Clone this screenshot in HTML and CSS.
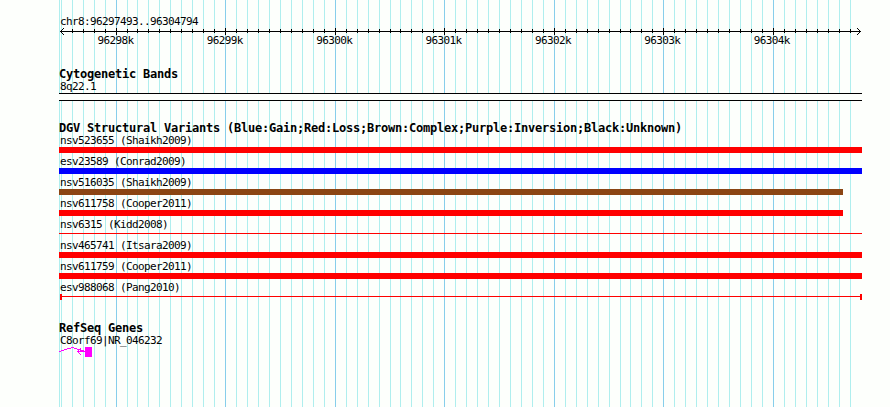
FILE: index.html
```
<!DOCTYPE html>
<html lang="en">
<head>
  <meta charset="UTF-8">
  <title>chr8:96297493..96304794</title>
  <link rel="stylesheet" href="styles.css">
</head>
<body>

  <svg class="grid" width="890" height="407">
    <path class="minor" id="minor"/>
    <path class="major" id="major"/>
  </svg>

  <div class="tracks">
    <div class="ruler">
      <div class="label">chr8:96297493..96304794</div>
      <svg class="scale" width="803" height="7">
        <path id="ticks"/>
        <path d="M1 3.5H802M2.5 2V3M3.5 1V2M4.5 0V1M2.5 4V5M3.5 5V6M4.5 6V7M800.5 2V3M799.5 1V2M798.5 0V1M800.5 4V5M799.5 5V6M798.5 6V7"/>
      </svg>
      <div class="numbers">
        <span>96298k</span>
        <span>96299k</span>
        <span>96300k</span>
        <span>96301k</span>
        <span>96302k</span>
        <span>96303k</span>
        <span>96304k</span>
      </div>
    </div>

    <div class="track cyto">
      <h2>Cytogenetic Bands</h2>
      <div class="label">8q22.1</div>
      <div class="band"></div>
    </div>

    <div class="track variants">
      <h2>DGV Structural Variants (Blue:Gain;Red:Loss;Brown:Complex;Purple:Inversion;Black:Unknown)</h2>
      <div class="variant">
        <div class="label">nsv523655 (Shaikh2009)</div>
        <div class="bar loss"></div>
      </div>
      <div class="variant">
        <div class="label">esv23589 (Conrad2009)</div>
        <div class="bar gain"></div>
      </div>
      <div class="variant">
        <div class="label">nsv516035 (Shaikh2009)</div>
        <div class="bar complex short"></div>
      </div>
      <div class="variant">
        <div class="label">nsv611758 (Cooper2011)</div>
        <div class="bar loss short"></div>
      </div>
      <div class="variant">
        <div class="label">nsv6315 (Kidd2008)</div>
        <div class="bar thin"></div>
      </div>
      <div class="variant">
        <div class="label">nsv465741 (Itsara2009)</div>
        <div class="bar loss"></div>
      </div>
      <div class="variant">
        <div class="label">nsv611759 (Cooper2011)</div>
        <div class="bar loss"></div>
      </div>
      <div class="variant">
        <div class="label">esv988068 (Pang2010)</div>
        <div class="bar thin capped"></div>
      </div>
    </div>

    <div class="track genes">
      <h2>RefSeq Genes</h2>
      <div class="label">C8orf69|NR_046232</div>
      <svg class="gene" width="34" height="12">
        <path d="M0 5.5L13.5 1.5L26 5.5M18.5 5.5H26M22 2.5L18.5 5.5L22 9"/>
        <rect x="26" y="1" width="7" height="10"/>
      </svg>
    </div>
  </div>

  <script>
    var minor = 'M59.5 0V407';
    var major = '';
    var ticks = '';
    var x = 61;
    for (var i = -5; x <= 850; i++) {
      if (i % 10 === 0) {
        major += 'M' + (x + 0.5) + ' 0V407';
        ticks += 'M' + (x - 58.5) + ' 0V7';
      } else {
        minor += 'M' + (x + 0.5) + ' 0V407';
        if (i > -5) ticks += 'M' + (x - 58.5) + ' 1V5';
      }
      // the rounded step is one pixel shorter at these lines
      x += (x === 127 || x === 390 || x === 620) ? 10 : 11;
    }
    document.getElementById('minor').setAttribute('d', minor);
    document.getElementById('major').setAttribute('d', major);
    document.getElementById('ticks').setAttribute('d', ticks);
  </script>

</body>
</html>
```

FILE: styles.css
```
body {
  margin: 0;
  height: 407px;
  overflow: hidden;
  background-color: #fdfffc;
  color: #000;
  font-family: 'DejaVu Sans Mono', monospace;
  font-size: 11px;
  line-height: 12px;
}

svg {
  display: block;
  fill: none;
  stroke: #000;
  shape-rendering: crispEdges;
}

.grid {
  position: absolute;
  top: 0;
  left: 0;
}

.minor {
  stroke: #afeeee;
}

.major {
  stroke: #87ceeb;
}

.tracks {
  position: relative;
  width: 803px;
  padding: 16px 0 0 59px;
}

.label {
  height: 12px;
  padding-left: 1px;
  letter-spacing: -0.62px;
  white-space: pre;
}

h2 {
  margin: 0;
  height: 12px;
  font-size: 12px;
  line-height: 10px;
  letter-spacing: -0.224px;
  white-space: pre;
}

.ruler {
  height: 53px;
}

.numbers {
  display: flex;
  gap: 73.4px;
  padding-left: 38.4px;
}

.numbers span {
  width: 36px;
  letter-spacing: -0.62px;
}

.cyto {
  height: 54px;
}

.band {
  box-sizing: border-box;
  height: 8px;
  border-top: 1px solid #000;
  border-bottom: 1px solid #000;
  background-color: #fdfffc;
}

.variants {
  height: 200px;
}

.variant {
  height: 21px;
}

.bar {
  height: 6px;
}

.loss {
  background-color: #f00;
}

.gain {
  background-color: #00f;
}

.complex {
  background-color: #8b4513;
}

.short {
  width: 784px;
}

.thin {
  height: 1px;
  margin-top: 2px;
  background-color: #f00;
}

.capped {
  box-sizing: border-box;
  height: 6px;
  margin: 0 0 0 1px;
  border: solid #f00;
  border-width: 0 2px;
  background: linear-gradient(#f00, #f00) 0 2px / 100% 1px no-repeat;
}

.gene {
  margin-top: -1px;
  stroke: #f0f;
}

.gene rect {
  fill: #f0f;
  stroke: none;
}
```
